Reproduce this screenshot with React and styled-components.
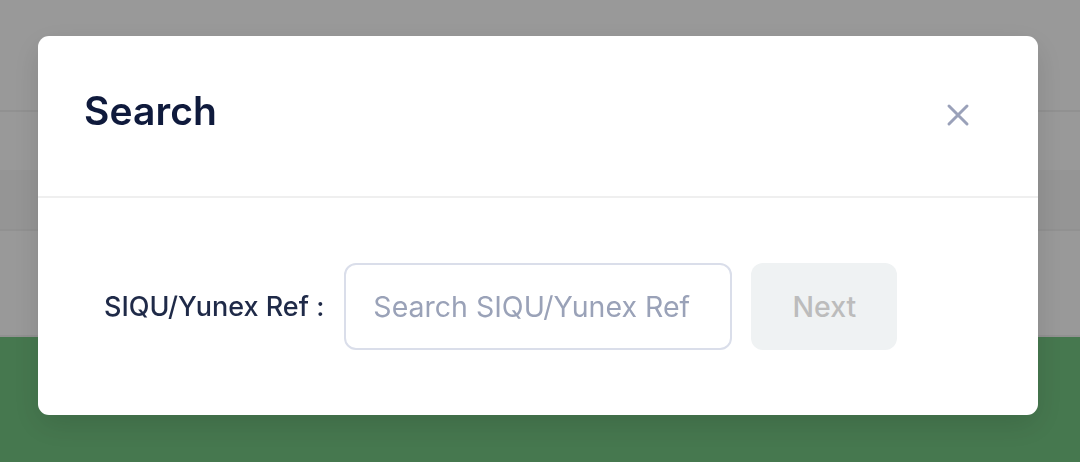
import React from "react";
import styled, { createGlobalStyle } from "styled-components";

const GlobalStyle = createGlobalStyle`
  html, body {
    margin: 0;
    padding: 0;
    background: #ffffff;
    font-family: Inter, "Noto Sans", "Liberation Sans", sans-serif;
  }
`;

// the page behind the modal
const Page = styled.div`
  width: 1080px;
  height: 462px;
  display: flex;
  flex-direction: column;
  overflow: hidden;
`;

const PageRow = styled.div`
  height: ${(p) => p.h}px;
  background: ${(p) => p.bg || "#ffffff"};
  border-bottom: ${(p) => (p.line ? "2px solid #f2f2f2" : "none")};
  flex-shrink: 0;
`;

const Footer = styled.div`
  flex: 1;
  background: #75c884;
`;

const Overlay = styled.div`
  position: fixed;
  inset: 0;
  background: rgba(0, 0, 0, 0.4);
  display: flex;
  align-items: flex-start;
`;

const Modal = styled.div`
  width: 1000px;
  margin: 36px 0 0 38px;
  background: #ffffff;
  border-radius: 11px;
  box-shadow: 0 10px 30px rgba(0, 0, 0, 0.12);
  display: flex;
  flex-direction: column;
`;

const Header = styled.div`
  height: 162px;
  display: flex;
  align-items: center;
  justify-content: space-between;
  padding: 0 68px 0 46px;
  border-bottom: 2px solid #efefef;
  box-sizing: border-box;
`;

const Title = styled.h2`
  margin: 0 0 12px;
  font-size: 39px;
  font-weight: 600;
  color: #0f1a3c;
  letter-spacing: 0.1px;
`;

const CloseButton = styled.button`
  border: none;
  background: none;
  padding: 0;
  width: 24px;
  height: 24px;
  display: flex;
  align-items: center;
  justify-content: center;
  cursor: pointer;
  margin-bottom: 2px;
`;

const Body = styled.div`
  display: flex;
  align-items: center;
  padding: 65px 46px 65px 66px;
  gap: 20px;
`;

const Label = styled.label`
  font-size: 27px;
  font-weight: 500;
  color: #1f2a48;
  white-space: nowrap;
`;

const Input = styled.input`
  width: 388px;
  height: 87px;
  box-sizing: border-box;
  border: 2px solid #dadeea;
  border-radius: 12px;
  padding: 0 27px;
  font-family: inherit;
  font-size: 28.5px;
  color: #1f2a48;
  outline: none;

  &::placeholder {
    color: #9aa2b8;
  }
`;

const NextButton = styled.button`
  width: 146px;
  height: 87px;
  border: none;
  border-radius: 12px;
  background: #eff2f3;
  color: #bcbcbc;
  font-family: inherit;
  font-size: 28.5px;
  font-weight: 500;
  margin-left: -1px;
`;

export default function App() {
  return (
    <>
      <GlobalStyle />
      <Page>
        <PageRow h={110} line />
        <PageRow h={58} />
        <PageRow h={59} bg="#f8f8f8" line />
        <PageRow h={104} line />
        <Footer />
      </Page>
      <Overlay>
        <Modal>
          <Header>
            <Title>Search</Title>
            <CloseButton aria-label="Close">
              <svg width="24" height="24" viewBox="0 0 24 24">
                <path
                  d="M3 3 L21 21 M21 3 L3 21"
                  stroke="#9aa1b9"
                  strokeWidth="3"
                  strokeLinecap="round"
                />
              </svg>
            </CloseButton>
          </Header>
          <Body>
            <Label htmlFor="ref">SIQU/Yunex Ref :</Label>
            <Input id="ref" placeholder="Search SIQU/Yunex Ref" />
            <NextButton disabled>Next</NextButton>
          </Body>
        </Modal>
      </Overlay>
    </>
  );
}
